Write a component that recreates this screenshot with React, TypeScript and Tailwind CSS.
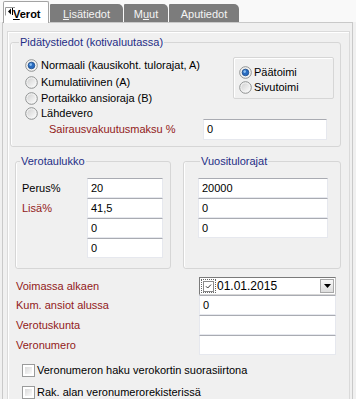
import { useId } from "react"

function Radio({ checked = false }: { checked?: boolean }) {
  const id = "g" + useId().replace(/[^a-zA-Z0-9]/g, "")
  return (
    <svg width="13" height="13" viewBox="0 0 13 13" className="shrink-0">
      <defs>
        <linearGradient id={id} x1="0" y1="0" x2="1" y2="1">
          <stop offset="0" stopColor="#d2d2d2" />
          <stop offset="1" stopColor="#fbfbfb" />
        </linearGradient>
      </defs>
      <circle cx="6.5" cy="6.5" r="5.8" fill="#f6f6f6" stroke="#8e9090" strokeWidth="1" />
      <circle cx="6.5" cy="6.5" r="4.3" fill={`url(#${id})`} />
      {checked && (
        <>
          <circle cx="6.5" cy="6.5" r="3.3" fill="#2a6cc0" stroke="#1b4b8c" strokeWidth="0.8" />
          <circle cx="5.7" cy="5.6" r="1.3" fill="#9fd0fb" opacity="0.85" />
        </>
      )}
    </svg>
  )
}

function Checkbox() {
  return (
    <span className="block w-[13px] h-[13px] border border-[#9a9b9b] bg-white p-[2px] shrink-0">
      <span className="block w-full h-full bg-gradient-to-br from-[#dadada] to-[#fbfbfb]" />
    </span>
  )
}

function Field({ value = "", className = "" }: { value?: string; className?: string }) {
  return (
    <div
      className={`h-[20px] bg-white border border-[#e6e8ee] border-t-[#a9abb2] pl-[3px] flex items-center text-black ${className}`}
    >
      {value}
    </div>
  )
}

function Tab({ children, w }: { children: React.ReactNode; w: string }) {
  return (
    <div
      className={`${w} h-[18px] bg-[#7c7c7c] text-[#f4f4f4] rounded-tr-[5px] rounded-tl-[1px] flex items-center justify-center pt-[2px]`}
    >
      {children}
    </div>
  )
}

export default function App() {
  return (
    <div className="w-[356px] h-[399px] overflow-hidden bg-[#f0f0f0] text-[11px] leading-[13px] text-black font-['Liberation_Sans',Arial,sans-serif]">
      {/* Tabs */}
      <div className="relative h-[22px] bg-[#f9f9f9] flex items-end pl-[3px] gap-[1px]">
        <div className="relative z-10 mb-[-1px] h-[22px] w-[46px] bg-white border border-b-0 border-[#a3a3a3] rounded-t-[2px] flex items-center pl-[9px] pt-[3px] font-bold">
          <span>
            <span className="underline">V</span>erot
          </span>
        </div>
        <Tab w="w-[73px]">
          <span>
            <span className="underline">L</span>isätiedot
          </span>
        </Tab>
        <Tab w="w-[44px]">
          <span>
            M<span className="underline">u</span>ut
          </span>
        </Tab>
        <Tab w="w-[70px]">Aputiedot</Tab>
        <svg width="11" height="9" viewBox="0 0 11 9" className="absolute left-[5px] top-[7px] z-20">
          <path d="M0.5 8.5 V0.5 H10" fill="none" stroke="#9a9a9a" />
          <path d="M3 4.5 L6 1.5 V7.5 Z" fill="#000" />
          <path d="M7.5 1 V8" stroke="#000" />
        </svg>
      </div>

      {/* Page */}
      <div className="ml-[2px] w-[351px] h-[377px] border-t border-x border-[#c9c9c9] bg-[#f0f0f0]">
        <div className="ml-[4px] mt-[8px] w-[343px] h-[368px] border-t border-x border-[#dadada] shadow-[inset_1px_1px_0_#ffffff]">
          {/* Pidätystiedot */}
          <fieldset className="ml-[2px] mt-[4px] w-[331px] border border-[#d6d6d6] rounded-[3px] shadow-[inset_1px_0_0_#ffffff] pb-[6px]">
            <legend className="ml-[8px] px-[1px] leading-[13px] text-[#1f2e86]">Pidätystiedot (kotivaluutassa)</legend>
            <div className="flex">
              <div className="w-[222px] pl-[14px] pt-[8px] flex flex-col">
                <div className="h-[17px] flex items-center gap-[3px]">
                  <Radio checked />
                  <span>Normaali (kausikoht. tulorajat, A)</span>
                </div>
                <div className="h-[17px] flex items-center gap-[3px]">
                  <Radio />
                  <span>Kumulatiivinen (A)</span>
                </div>
                <div className="h-[15px] flex items-center gap-[3px]">
                  <Radio />
                  <span>Portaikko ansioraja (B)</span>
                </div>
                <div className="h-[14px] flex items-center gap-[3px]">
                  <Radio />
                  <span>Lähdevero</span>
                </div>
              </div>
              <div className="mt-[8px] w-[101px] h-[42px] border border-[#d6d6d6] rounded-[2px] shadow-[inset_1px_1px_0_#ffffff] pl-[5px] pt-[7px] flex flex-col">
                <div className="h-[15px] flex items-center gap-[2px]">
                  <Radio checked />
                  <span>Päätoimi</span>
                </div>
                <div className="h-[15px] flex items-center gap-[2px]">
                  <Radio />
                  <span>Sivutoimi</span>
                </div>
              </div>
            </div>
            <div className="mt-[-1px] h-[21px] flex items-center">
              <span className="pl-[38px] w-[192px] text-[#921a1a]">Sairausvakuutusmaksu %</span>
              <Field value="0" className="w-[124px] h-[21px]" />
            </div>
          </fieldset>

          {/* Verotaulukko / Vuositulorajat */}
          <div className="mt-[8px] flex">
            <fieldset className="ml-[7px] w-[156px] h-[114px] border border-[#d6d6d6] rounded-[3px] shadow-[inset_1px_0_0_#ffffff] pt-[10px]">
              <legend className="ml-[4px] px-[1px] leading-[13px] text-[#1f2e86]">Verotaulukko</legend>
              <div className="flex items-center">
                <span className="pl-[6px] w-[71px]">Perus%</span>
                <Field value="20" className="w-[76px]" />
              </div>
              <div className="flex items-center">
                <span className="pl-[6px] w-[71px] text-[#921a1a]">Lisä%</span>
                <Field value="41,5" className="w-[76px]" />
              </div>
              <div className="flex items-center">
                <span className="w-[71px]" />
                <Field value="0" className="w-[76px]" />
              </div>
              <div className="flex items-center">
                <span className="w-[71px]" />
                <Field value="0" className="w-[76px]" />
              </div>
            </fieldset>
            <fieldset className="ml-[12px] w-[158px] h-[114px] border border-[#d6d6d6] rounded-[3px] shadow-[inset_1px_0_0_#ffffff] pt-[10px] pl-[14px]">
              <legend className="ml-[2px] px-[1px] leading-[13px] text-[#1f2e86]">Vuositulorajat</legend>
              <Field value="20000" className="w-[130px]" />
              <Field value="0" className="w-[130px]" />
              <Field value="0" className="w-[130px]" />
            </fieldset>
          </div>

          {/* Bottom fields */}
          <div className="mt-[8px] flex flex-col">
            <div className="h-[18px] flex items-center">
              <span className="pl-[8px] w-[191px] text-[#921a1a]">Voimassa alkaen</span>
              <div className="w-[137px] h-[18px] bg-white border border-[#7a7a7a] border-r-[#bdbdbd] border-b-[#d6d6d6] flex items-center">
                <span className="ml-[1px] w-[15px] h-[14px] border border-dotted border-[#666] flex items-center justify-center">
                  <svg width="11" height="11" viewBox="0 0 11 11">
                    <rect x="0.5" y="0.5" width="10" height="10" fill="#fff" stroke="#8a8a8a" />
                    <path d="M3 5.3 L4.7 7 L8 3.6" fill="none" stroke="#333" strokeWidth="1" />
                  </svg>
                </span>
                <span className="ml-[1px] text-[12px]">01.01.2015</span>
                <span className="ml-auto mr-[1px] w-[14px] h-[14px] border border-[#a8a8a8] bg-gradient-to-b from-[#f8f8f8] to-[#dddddd] flex items-center justify-center">
                  <svg width="7" height="4" viewBox="0 0 7 4">
                    <path d="M0 0 H7 L3.5 4 Z" fill="#000" />
                  </svg>
                </span>
              </div>
            </div>
            <div className="flex items-center">
              <span className="pl-[8px] w-[191px] text-[#921a1a]">Kum. ansiot alussa</span>
              <Field value="0" className="w-[137px]" />
            </div>
            <div className="flex items-center">
              <span className="pl-[8px] w-[191px] text-[#921a1a]">Verotuskunta</span>
              <Field className="w-[137px]" />
            </div>
            <div className="flex items-center">
              <span className="pl-[8px] w-[191px] text-[#921a1a]">Veronumero</span>
              <Field className="w-[137px]" />
            </div>
            <div className="mt-[5px] h-[20px] pl-[14px] flex items-center gap-[2px]">
              <Checkbox />
              <span>Veronumeron haku verokortin suorasiirtona</span>
            </div>
            <div className="mt-[2px] h-[20px] pl-[14px] flex items-center gap-[2px]">
              <Checkbox />
              <span>Rak. alan veronumerorekisterissä</span>
            </div>
          </div>
        </div>
      </div>
    </div>
  )
}
